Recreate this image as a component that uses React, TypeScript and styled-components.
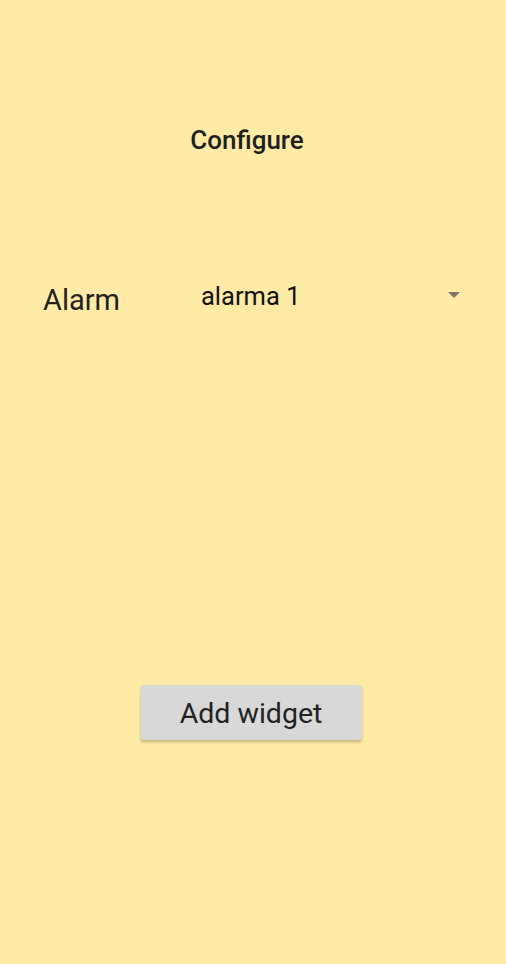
import styled, { createGlobalStyle } from "styled-components";

const GlobalStyle = createGlobalStyle`
  html, body {
    margin: 0;
    padding: 0;
    background: #ffeba6;
  }
  body {
    font-family: Roboto, "Noto Sans", "Liberation Sans", sans-serif;
    color: #212121;
  }
`;

const Screen = styled.div`
  width: 506px;
  height: 964px;
  background: #ffeba6;
  display: flex;
  flex-direction: column;
  box-sizing: border-box;
`;

const Title = styled.h1`
  margin: 0;
  padding-top: 124px;
  padding-right: 12px;
  text-align: center;
  font-size: 26px;
  font-weight: 500;
  line-height: 32px;
  color: #1f1f1f;
`;

const FieldRow = styled.div`
  display: flex;
  align-items: center;
  margin-top: 121px;
  padding-left: 43px;
  padding-right: 44px;
  height: 40px;
`;

const Label = styled.span`
  width: 158px;
  font-size: 29px;
  line-height: 40px;
  color: #222;
  position: relative;
  top: 3px;
`;

const Select = styled.div`
  flex: 1;
  display: flex;
  align-items: center;
  justify-content: space-between;
  font-size: 25.5px;
  line-height: 40px;
  color: #111;
  margin-top: -3px;
`;

const Arrow = styled.span`
  width: 0;
  height: 0;
  border-left: 6px solid transparent;
  border-right: 6px solid transparent;
  border-top: 6px solid #7a7468;
  margin-right: 2px;
  margin-top: -2px;
`;

const ButtonWrap = styled.div`
  display: flex;
  justify-content: center;
  margin-top: 368px;
  padding-right: 4px;
`;

const Button = styled.button`
  width: 221px;
  height: 55px;
  border: none;
  border-radius: 2px;
  background: #d7d8d7;
  box-shadow: 0 2px 3px rgba(0, 0, 0, 0.25);
  font-family: Roboto, "Noto Sans", "Liberation Sans", sans-serif;
  font-size: 28.5px;
  color: #222;
  padding: 1px 0 0;
`;

export default function App() {
  return (
    <>
      <GlobalStyle />
      <Screen>
        <Title>Configure</Title>
        <FieldRow>
          <Label>Alarm</Label>
          <Select>
            <span>alarma 1</span>
            <Arrow />
          </Select>
        </FieldRow>
        <ButtonWrap>
          <Button>Add widget</Button>
        </ButtonWrap>
      </Screen>
    </>
  );
}
